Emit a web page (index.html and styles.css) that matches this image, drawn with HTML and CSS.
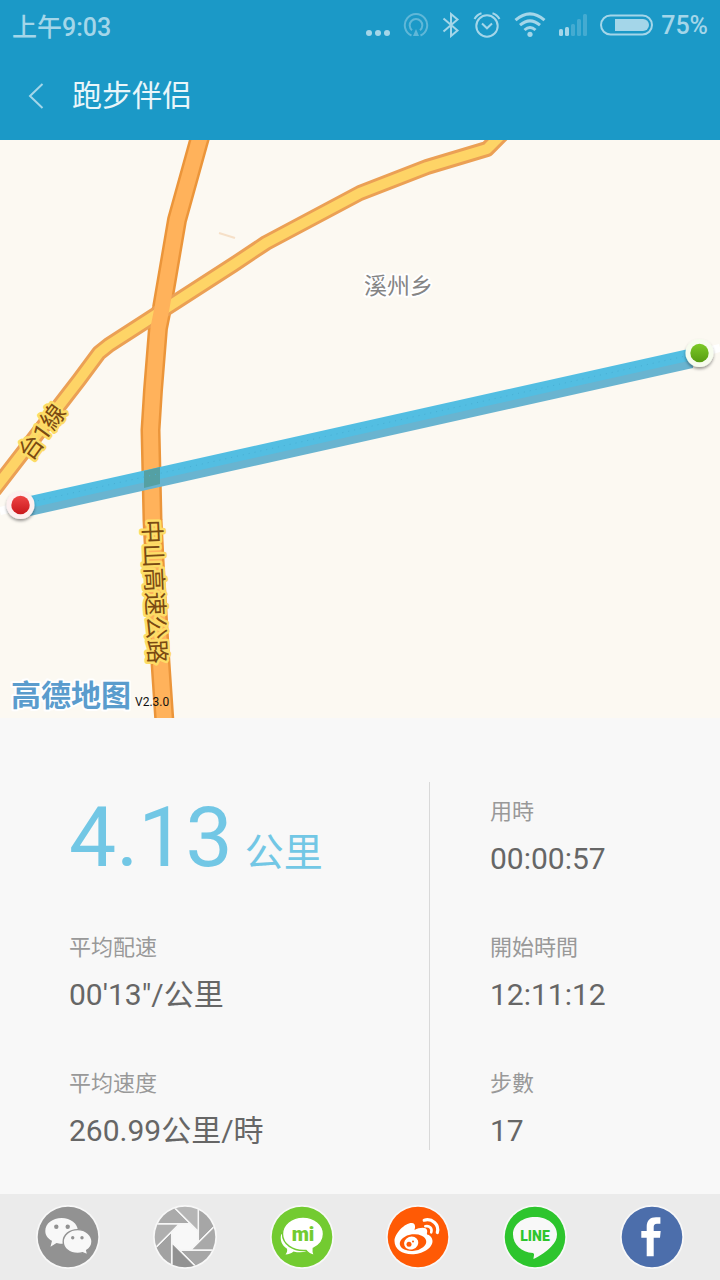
FILE: index.html
```html
<!DOCTYPE html>
<html lang="zh">
<head>
<meta charset="utf-8">
<meta name="viewport" content="width=device-width, initial-scale=1">
<title>跑步伴侣</title>
<link rel="stylesheet" href="styles.css">
</head>
<body>
<div class="app">
  <header class="top">
    <div class="status">
      <span class="clock">上午9:03</span>
      <div class="indicators">
        <svg width="24" height="26" viewBox="0 0 24 26" class="fill"><circle cx="3" cy="21" r="3"/><circle cx="12" cy="21" r="3"/><circle cx="21" cy="21" r="3"/></svg>
        <svg width="26" height="26" viewBox="0 0 26 26" class="line dim"><path d="M8.500 23.500A11.200 11.200 0 1 1 17.500 23.500M9 18.200A6.300 6.300 0 1 1 17 18.200"/><path class="solid" d="M13 17L16 24H10Z"/></svg>
        <svg width="18" height="26" viewBox="0 0 18 26" class="line"><path d="M1.500 6.500L15.500 18.500L9 24V2L15.500 7.500L1.500 19.500"/></svg>
        <svg width="28" height="26" viewBox="0 0 28 26" class="line"><circle cx="14" cy="14" r="10.700"/><path d="M9 11.500L14 16.300L19 11.500M1.500 7Q4 2.500 8.500 1.200M26.500 7Q24 2.500 19.500 1.200"/></svg>
        <svg width="32" height="26" viewBox="0 0 32 26" class="line wifi"><path d="M1.500 8.200Q16 -4.500 30.500 8.200M6 13.200Q16 4.500 26 13.200M10.500 18Q16 13 21.500 18"/><circle class="solid" cx="16" cy="22.300" r="2.600"/></svg>
        <svg width="28" height="26" viewBox="0 0 28 26" class="fill"><rect x="0" y="17" width="4" height="7" rx="1.500"/><rect x="6" y="15" width="4" height="9" rx="1.500"/><g opacity=".3"><rect x="12" y="12" width="4" height="12" rx="1.500"/><rect x="18" y="7" width="4" height="17" rx="1.500"/><rect x="24" y="2" width="4" height="22" rx="1.500"/></g></svg>
        <div class="power">
          <svg width="53" height="26" viewBox="0 0 53 26" class="line"><rect x="1" y="3.500" width="51" height="19" rx="9.500"/><path class="solid" d="M15 7H43A6 6 0 0 1 43 19H15Z"/></svg>
          <span>75%</span>
        </div>
      </div>
    </div>
    <div class="titlebar">
      <button class="back" type="button" aria-label="返回"><svg width="16" height="26" viewBox="0 0 16 26" class="line"><path d="M14.500 1L2 13L14.500 25"/></svg></button>
      <h1>跑步伴侣</h1>
    </div>
  </header>

  <main>
    <svg class="map" viewBox="0 0 720 578" role="img" aria-label="路线">
      <defs>
        <linearGradient id="red" x1="0" y1="0" x2="0" y2="1"><stop offset="0" stop-color="#ee4545"/><stop offset="1" stop-color="#c9181c"/></linearGradient>
        <linearGradient id="green" x1="0" y1="0" x2="0" y2="1"><stop offset="0" stop-color="#7bca26"/><stop offset="1" stop-color="#589c12"/></linearGradient>
        <filter id="shadow" x="-30%" y="-30%" width="160%" height="160%"><feDropShadow dx="0" dy="2" stdDeviation="1.500" flood-color="#000" flood-opacity=".4"/></filter>
      </defs>
      <path class="lane" d="M219 93L235 98"/>
      <path class="highway-edge" d="M202 -10L177 80L162 168L158 188L153 250L150.500 290L152.500 380L155 430L160.500 523L165 590"/>
      <path class="road-edge" d="M506 -10L487 9L427 27L360 53L266 103L233 125L109 205L99 213L79 240L-6 350"/>
      <path class="road" d="M506 -10L487 9L427 27L360 53L266 103L233 125L109 205L99 213L79 240L-6 350"/>
      <path class="highway" d="M202 -10L177 80L162 168L158 188L153 250L150.500 290L152.500 380L155 430L160.500 523L165 590"/>
      <path fill="#69b4d0" d="M30 366L693 218V228L30 376Z"/>
      <path fill="#53bee2" d="M30 356L693 208V220L30 368Z"/>
      <path fill="#55a0a3" d="M144 331L160 327V344L144 348Z"/>
      <path class="dots" d="M32 362L690 215"/>
      <path class="ends" d="M0 371L8 369M712 210L720 208"/>
      <text class="place" x="364" y="154">溪州乡</text>
      <text class="road-name" text-anchor="middle" transform="translate(49 297) rotate(-54)">台1線</text>
      <text class="road-name" transform="translate(143 380) rotate(87.600)">中山高速公路</text>
      <text class="brand" x="11" y="566">高德地图</text>
      <text class="version" x="135" y="566">V2.3.0</text>
      <g filter="url(#shadow)"><circle cx="20.500" cy="365" r="14" fill="#fdf0f0"/><circle cx="699.500" cy="213" r="14" fill="#f7fcee"/></g>
      <circle cx="20.500" cy="365" r="9.200" fill="url(#red)"/>
      <circle cx="699.500" cy="213" r="9.200" fill="url(#green)"/>
    </svg>

    <section class="stats">
      <div class="column">
        <div class="distance"><strong>4.13</strong><span>公里</span></div>
        <dl><dt>平均配速</dt><dd>00'13"/公里</dd></dl>
        <dl><dt>平均速度</dt><dd>260.99公里/時</dd></dl>
      </div>
      <div class="column side">
        <dl><dt>用時</dt><dd>00:00:57</dd></dl>
        <dl><dt>開始時間</dt><dd>12:11:12</dd></dl>
        <dl><dt>步數</dt><dd>17</dd></dl>
      </div>
    </section>
  </main>

  <footer class="share">
    <button type="button" aria-label="微信">
      <svg viewBox="-32 -32 64 64"><circle class="rim" r="32"/><circle r="30.300" fill="#929292"/>
        <path fill="#f8f8f8" d="M-17.500 9.800L-16 3.800C-20.500 1.500 -22.700 -2 -22.700 -6C-22.700 -13.300 -15.500 -18.900 -6.400 -18.900C2.600 -18.900 9.800 -13.300 9.800 -6.200C9.800 1 2.600 6.800 -6.400 6.800C-8.400 6.800 -9.800 6.600 -11.500 6.100Z"/>
        <path fill="#f8f8f8" stroke="#929292" stroke-width="1.400" d="M19.700 17.800L18.700 13.300C22.200 11.200 24 8 24 4.700C24 -2 17.800 -7.400 9.600 -7.400C1.500 -7.400 -4.800 -2 -4.800 4.700C-4.800 11.400 1.500 16.500 9.600 16.500C11.600 16.500 13 16.300 14.600 15.700Z"/>
        <g fill="#929292"><circle cx="-11.700" cy="-10.300" r="2.200"/><circle cx="-.300" cy="-10.300" r="2.200"/><circle cx="4.700" cy=".700" r="1.700"/><circle cx="14" cy=".700" r="1.700"/></g>
      </svg>
    </button>
    <button type="button" aria-label="朋友圈">
      <svg viewBox="-32 -32 64 64">
        <defs><clipPath id="lens"><circle r="30.300"/></clipPath><path id="blade" stroke="#f6f6f6" stroke-width="1.500" d="M13.300 5.500V-33H42L37.500 -18.700Z"/></defs>
        <circle class="rim" r="32"/>
        <g clip-path="url(#lens)">
          <use href="#blade" fill="#a6a6a6"/><use href="#blade" fill="#a9a9a9" transform="rotate(45)"/><use href="#blade" fill="#a6a6a6" transform="rotate(90)"/><use href="#blade" fill="#929292" transform="rotate(135)"/><use href="#blade" fill="#a2a2a2" transform="rotate(180)"/><use href="#blade" fill="#afafaf" transform="rotate(225)"/><use href="#blade" fill="#aaa" transform="rotate(270)"/><use href="#blade" fill="#b5b5b5" transform="rotate(315)"/>
        </g>
      </svg>
    </button>
    <button type="button" aria-label="米聊">
      <svg viewBox="-32 -32 64 64"><circle class="rim" r="32"/><circle r="30.300" fill="#73cb31"/>
        <path fill="#fff" d="M-20.800 -3C-22.200 3 -20.500 8 -15 11.700C-14.500 14 -15 15.500 -16.500 17.500C-13 17.300 -10.500 16 -8.500 14.400C-4 15.500 0 15.500 4 14.500Z"/>
        <path fill="#fff" stroke="#73cb31" stroke-width="1.400" d="M1 -19.900C12.500 -19.900 21.500 -12.500 21.500 -3C21.500 3.500 17.500 8.500 11.300 11.300C10.800 14 11 16 12.500 18.500C8.500 17.500 5.500 15.500 4 13.400C-9 14.500 -19.500 7 -19.500 -3C-19.500 -12.500 -10.500 -19.900 1 -19.900Z"/>
        <text class="mi" x="1" y="4">mi</text>
      </svg>
    </button>
    <button type="button" aria-label="微博">
      <svg viewBox="-32 -32 64 64"><circle class="rim" r="32"/><circle r="30.300" fill="#ff5a05"/>
        <path fill="#fff" d="M-23.500 4C-23.500 -4 -12.500 -14.500 -6 -14C-2.500 -13.700 -2.500 -10 -3.500 -7C1 -9.500 8 -10.500 9 -7C9.700 -5 8.500 -3 9 -2.500C12 -2 14.500 1 14.500 4C14.500 11.500 4 17.300 -6 17.300C-16 17.300 -23.500 12 -23.500 4Z"/>
        <ellipse cx="-5" cy="5.600" rx="13.300" ry="8.300" fill="#ff5a05" transform="rotate(-7 -5 5.600)"/>
        <ellipse cx="-6.800" cy="6" rx="7.200" ry="6.500" fill="#fff" transform="rotate(-20 -6.800 6)"/>
        <circle cx="-9" cy="7.200" r="2.500" fill="#ff5a05"/><circle cx="-5" cy="4.600" r="1" fill="#ff5a05"/>
        <path fill="none" stroke="#fff" stroke-linecap="round" stroke-width="3.200" d="M6.200 -16.800C14 -19 21.500 -12.500 19.300 -4.500"/>
        <path fill="none" stroke="#fff" stroke-linecap="round" stroke-width="2.600" d="M7.300 -10.700C11.500 -11.700 14.500 -8.500 13.200 -4.700"/>
      </svg>
    </button>
    <button type="button" aria-label="LINE">
      <svg viewBox="-32 -32 64 64"><circle class="rim" r="32"/><circle r="30.300" fill="#2dc52d"/>
        <path fill="#f8f8f8" d="M0 -20C12.500 -20 22 -12.500 22 -2.800C22 2 20 5.500 16.500 9.200C11.500 14.500 4 19.500 -1.500 22C-1.500 19.500 0 17 -2 16C-13.500 15 -22 7.500 -22 -2.800C-22 -12.500 -12.500 -20 0 -20Z"/>
        <text class="line-word" x="0" y="4">LINE</text>
      </svg>
    </button>
    <button type="button" aria-label="Facebook">
      <svg viewBox="-32 -32 64 64"><circle class="rim" r="32"/><circle r="30.300" fill="#4c6eab"/>
        <path fill="#fff" d="M-5.300 19.300V.700H-10.700V-6H-5.300V-10C-5.300 -16.500 -2 -19.700 4 -19.700H8.400V-13.300H5C2.500 -13.300 1.700 -12 1.700 -10V-6H8.700L8 .700H1.700V19.300Z"/>
      </svg>
    </button>
  </footer>
</div>
</body>
</html>
```

FILE: styles.css
```css
* { box-sizing: border-box; }
body {
  margin: 0;
  background: #f8f8f8;
  font-family: Roboto, "Noto Sans CJK SC", sans-serif;
}
.app {
  display: flex;
  flex-direction: column;
  min-height: 100vh;
}
main { flex: 1; }
svg { display: block; }
button {
  padding: 0;
  border: 0;
  background: none;
  font-family: inherit;
  cursor: pointer;
}

.top { background: #1b99c7; color: #a4d6e9; }
.status {
  display: flex;
  align-items: center;
  justify-content: space-between;
  height: 50px;
  padding: 0 12px;
  font-size: 25px;
  font-weight: 500;
}
.indicators { display: flex; align-items: center; gap: 13px; }
.power { display: flex; align-items: center; gap: 8px; }
.fill { fill: #a4d6e9; }
.line { fill: none; stroke: #a4d6e9; stroke-width: 2; }
.line .solid { fill: #a4d6e9; stroke: none; }
.dim { opacity: .5; }
.wifi { stroke-width: 3; }
.titlebar {
  display: flex;
  align-items: center;
  gap: 28px;
  height: 90px;
  padding: 2px 28px 0;
}
h1 {
  margin: 0;
  color: #e9f6fa;
  font-size: 30px;
  font-weight: 400;
  line-height: 40px;
}

.map { width: 100%; height: auto; background: #fcf9f2; }
.highway-edge, .highway, .road-edge, .road, .lane, .dots, .ends { fill: none; stroke-linejoin: round; }
.highway-edge { stroke: #eb953a; stroke-width: 20px; }
.highway { stroke: #ffb25b; stroke-width: 15px; }
.road-edge { stroke: #eba055; stroke-width: 16px; }
.road { stroke: #fed466; stroke-width: 10px; }
.lane { stroke: #f6e0c8; stroke-width: 2px; }
.dots { stroke: #48afd4; stroke-width: 1px; stroke-dasharray: 1 5; }
.ends { stroke: #fff; stroke-width: 8px; }
.map text { paint-order: stroke; stroke-linejoin: round; }
.place { fill: #858585; stroke: #fff; stroke-width: 4px; font-size: 23px; }
.road-name { fill: #7a4a12; stroke: #fddc66; stroke-width: 5px; font-size: 24px; }
.brand { fill: #5a9ccd; stroke: #fff; stroke-width: 4px; font-size: 30px; font-weight: 700; }
.version { fill: #111; font-size: 12px; }

.stats {
  display: grid;
  grid-template-columns: 429fr 291fr;
  padding: 64px 0 44px;
}
.column {
  display: flex;
  flex-direction: column;
  gap: 56px;
  padding: 15px 0 1px 69px;
}
.side { padding-left: 60px; border-left: 1px solid #d9d9d9; }
dl { margin: 0; }
dt {
  margin-bottom: 14px;
  color: #999;
  font-size: 22px;
  line-height: 30px;
}
dd {
  margin: 0;
  color: #666;
  font-size: 30px;
  line-height: 36px;
}
.distance {
  display: flex;
  align-items: baseline;
  gap: 12px;
  height: 80px;
  color: #72c7e5;
  line-height: 82px;
}
.distance strong { font-size: 84px; font-weight: 400; }
.distance span { font-size: 39px; }

.share {
  display: flex;
  justify-content: space-between;
  padding: 11px 36px;
  background: #ebebeb;
}
.share svg { width: 64px; height: 64px; }
.rim { fill: #f8f8f8; }
.mi { fill: #73cb31; font-size: 20px; font-weight: 900; text-anchor: middle; }
.line-word { fill: #2dc52d; font-size: 14px; font-weight: 900; text-anchor: middle; }
```
